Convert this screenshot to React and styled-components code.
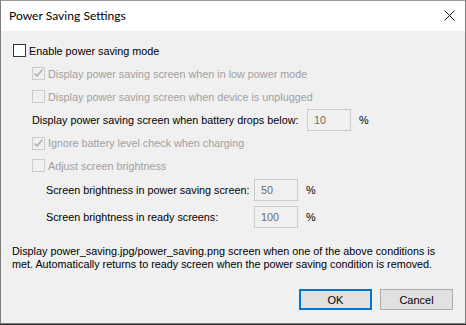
import React from "react";
import styled, { createGlobalStyle } from "styled-components";

const Global = createGlobalStyle`
  html, body { margin: 0; padding: 0; background: #2b2b2b; }
  body { width: 466px; height: 325px; overflow: hidden; }
`;

const Window = styled.div`
  box-sizing: border-box;
  width: 466px;
  height: 324px;
  border: 1px solid #7d7d7d;
  border-top-color: #9a9a9a;
  background: #f0f0f0;
  display: flex;
  flex-direction: column;
  font-family: "Liberation Sans", Arial, sans-serif;
  font-size: 10.8px;
  color: #000;
`;

const TitleBar = styled.div`
  height: 30px;
  background: #fff;
  display: flex;
  align-items: center;
  justify-content: space-between;
  padding: 0 10px 0 8px;
  flex-shrink: 0;
`;

const Title = styled.span`
  font-family: Lato, "Segoe UI", sans-serif;
  font-size: 12.1px;
  color: #000;
  padding-bottom: 2px;
`;

const Close = styled.svg`
  width: 11px;
  height: 11px;
  margin-bottom: 1px;
`;

const Body = styled.div`
  display: flex;
  flex-direction: column;
  padding: 8px 0 0 11px;
`;

const Row = styled.div`
  display: flex;
  align-items: center;
  height: ${(p) => p.$h || 23}px;
  padding-left: ${(p) => p.$indent || 0}px;
  color: ${(p) => (p.$disabled ? "#a0a0a0" : "#000")};
  white-space: nowrap;
`;

const Box = styled.span`
  box-sizing: border-box;
  width: 13px;
  height: 13px;
  border: 1px solid ${(p) => (p.$disabled ? "#cccccc" : "#333333")};
  background: ${(p) => (p.$disabled ? "#f0f0f0" : "#ffffff")};
  margin-right: 3px;
  display: flex;
  align-items: center;
  justify-content: center;
  flex-shrink: 0;
`;

const Label = styled.span`
  display: inline-block;
  width: ${(p) => (p.$w ? p.$w + "px" : "auto")};
`;

const Input = styled.span`
  box-sizing: border-box;
  width: 44px;
  height: 22px;
  border: 1px solid #cccccc;
  background: #f0f0f0;
  color: #6d6d6d;
  padding-left: 6px;
  display: flex;
  align-items: center;
`;

const Pct = styled.span`
  margin-left: 8px;
`;

const Para = styled.p`
  margin: 14px 0 0 0;
  line-height: 13px;
  width: 440px;
`;

const Buttons = styled.div`
  display: flex;
  justify-content: flex-end;
  gap: 8px;
  padding: 18px 12px 0 0;
`;

const Button = styled.button`
  box-sizing: border-box;
  width: 73px;
  height: 21px;
  font-family: "Liberation Sans", Arial, sans-serif;
  font-size: 11px;
  color: #000;
  background: #e1e1e1;
  border: ${(p) => (p.$primary ? "2px solid #0078d7" : "1px solid #adadad")};
  padding: 0;
`;

function Check({ checked, disabled }) {
  return (
    <Box $disabled={disabled}>
      {checked && (
        <svg width="11" height="11" viewBox="0 0 11 11">
          <polyline
            points="1.5,5.5 4,8 9.5,1.5"
            fill="none"
            stroke={disabled ? "#a6a6a6" : "#333"}
            strokeWidth="1.2"
          />
        </svg>
      )}
    </Box>
  );
}

export default function App() {
  return (
    <>
      <Global />
      <Window>
        <TitleBar>
          <Title>Power Saving Settings</Title>
          <Close viewBox="0 0 11 11">
            <path d="M0.5 0.5 L10.5 10.5 M10.5 0.5 L0.5 10.5" stroke="#111" strokeWidth="1" />
          </Close>
        </TitleBar>
        <Body>
          <Row $indent={1}>
            <Check />
            <span>Enable power saving mode</span>
          </Row>
          <Row $indent={20} $disabled>
            <Check checked disabled />
            <span>Display power saving screen when in low power mode</span>
          </Row>
          <Row $indent={20} $disabled>
            <Check disabled />
            <span>Display power saving screen when device is unplugged</span>
          </Row>
          <Row $h={24} $indent={20}>
            <Label $w={275}>Display power saving screen when battery drops below:</Label>
            <Input>10</Input>
            <Pct>%</Pct>
          </Row>
          <Row $h={22} $indent={20} $disabled>
            <Check checked disabled />
            <span>Ignore battery level check when charging</span>
          </Row>
          <Row $indent={20} $disabled>
            <Check disabled />
            <span>Adjust screen brightness</span>
          </Row>
          <Row $h={26} $indent={34}>
            <Label $w={208}>Screen brightness in power saving screen:</Label>
            <Input>50</Input>
            <Pct>%</Pct>
          </Row>
          <Row $h={28} $indent={34}>
            <Label $w={208}>Screen brightness in ready screens:</Label>
            <Input>100</Input>
            <Pct>%</Pct>
          </Row>
          <Para>
            Display power_saving.jpg/power_saving.png screen when one of the above conditions is
            met. Automatically returns to ready screen when the power saving condition is removed.
          </Para>
        </Body>
        <Buttons>
          <Button $primary>OK</Button>
          <Button>Cancel</Button>
        </Buttons>
      </Window>
    </>
  );
}
